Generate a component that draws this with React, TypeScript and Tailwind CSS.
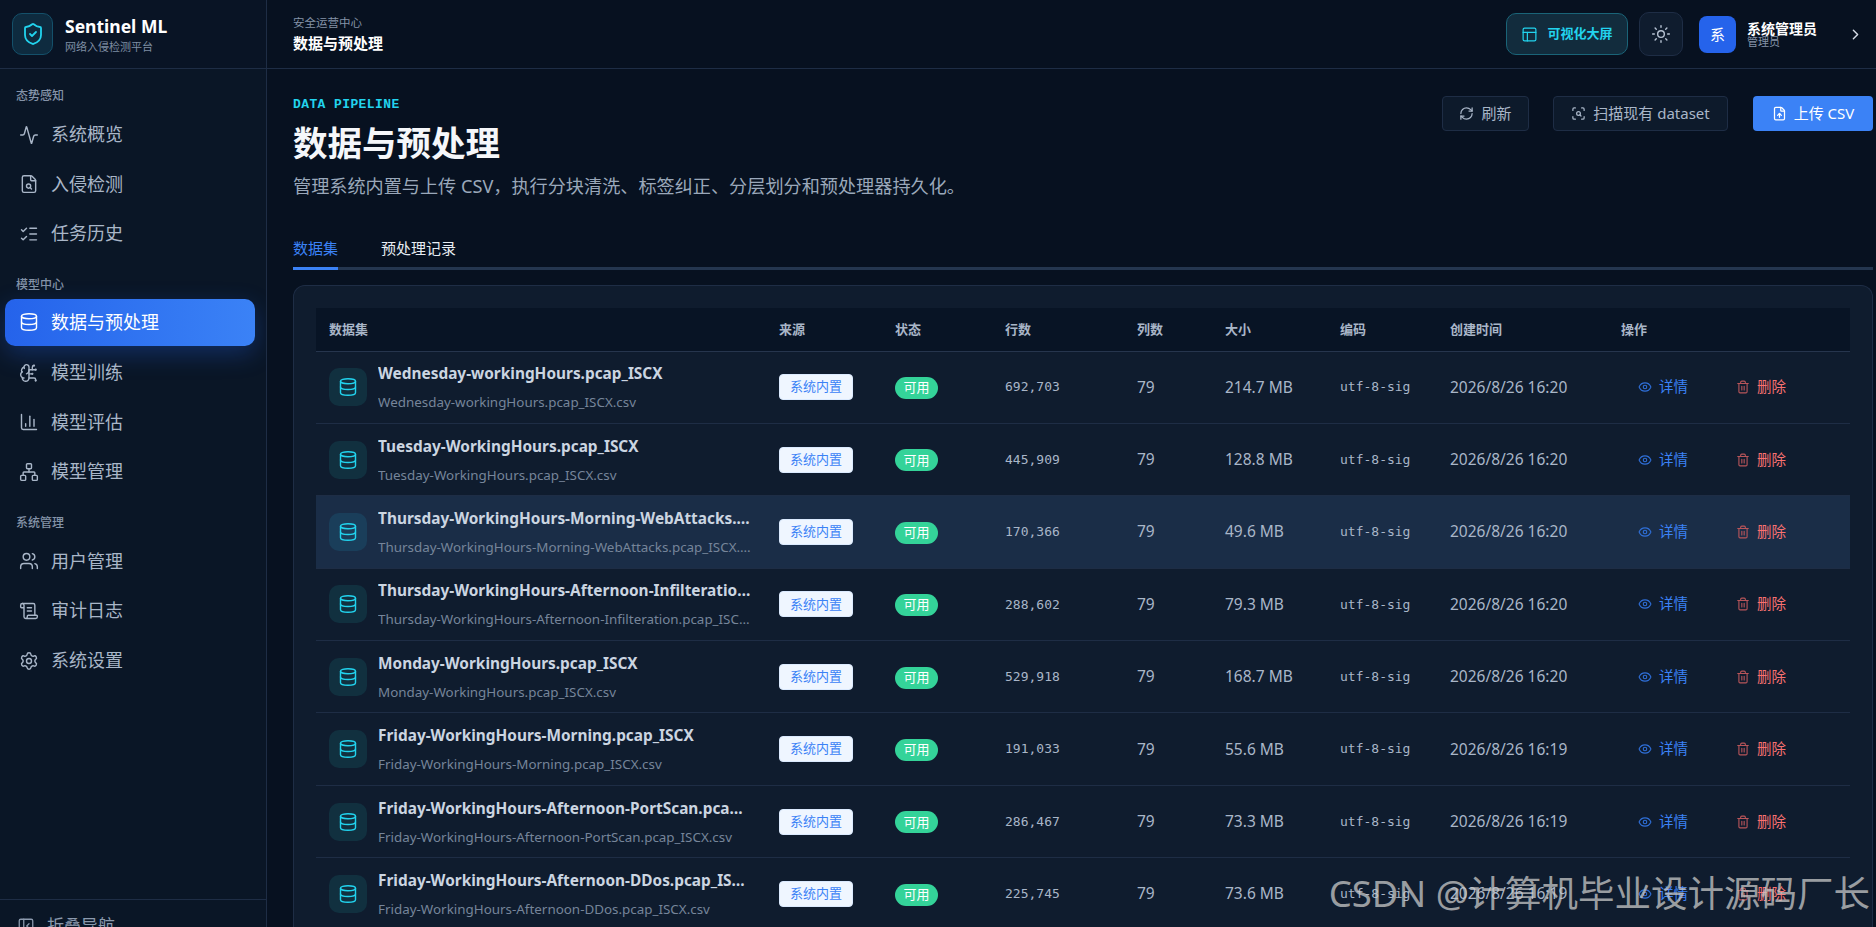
import {
  Activity, BrainCircuit, ChartColumn, ChevronRight, Database, Eye, FileSearch, FileUp, ListChecks,
  Network, PanelLeftClose, PanelsTopLeft, RefreshCw, ScanSearch, ScrollText, Settings, ShieldCheck, Sun, Trash2, Users,
} from 'lucide-react'

const NAV = [
  {
    title: '态势感知',
    items: [
      { label: '系统概览', icon: Activity },
      { label: '入侵检测', icon: FileSearch },
      { label: '任务历史', icon: ListChecks },
    ],
  },
  {
    title: '模型中心',
    items: [
      { label: '数据与预处理', icon: Database, active: true },
      { label: '模型训练', icon: BrainCircuit },
      { label: '模型评估', icon: ChartColumn },
      { label: '模型管理', icon: Network },
    ],
  },
  {
    title: '系统管理',
    items: [
      { label: '用户管理', icon: Users },
      { label: '审计日志', icon: ScrollText },
      { label: '系统设置', icon: Settings },
    ],
  },
]

const ROWS = [
  { name: 'Wednesday-workingHours.pcap_ISCX', rows: '692,703', size: '214.7 MB', time: '2026/8/26 16:20' },
  { name: 'Tuesday-WorkingHours.pcap_ISCX', rows: '445,909', size: '128.8 MB', time: '2026/8/26 16:20' },
  { name: 'Thursday-WorkingHours-Morning-WebAttacks.pcap_ISCX', rows: '170,366', size: '49.6 MB', time: '2026/8/26 16:20', hover: true },
  { name: 'Thursday-WorkingHours-Afternoon-Infilteration.pcap_ISCX', rows: '288,602', size: '79.3 MB', time: '2026/8/26 16:20' },
  { name: 'Monday-WorkingHours.pcap_ISCX', rows: '529,918', size: '168.7 MB', time: '2026/8/26 16:20' },
  { name: 'Friday-WorkingHours-Morning.pcap_ISCX', rows: '191,033', size: '55.6 MB', time: '2026/8/26 16:19' },
  { name: 'Friday-WorkingHours-Afternoon-PortScan.pcap_ISCX', rows: '286,467', size: '73.3 MB', time: '2026/8/26 16:19' },
  { name: 'Friday-WorkingHours-Afternoon-DDos.pcap_ISCX', rows: '225,745', size: '73.6 MB', time: '2026/8/26 16:19' },
]

const COLUMNS = [
  { label: '数据集', width: 'w-[450px]' },
  { label: '来源', width: 'w-[116px]' },
  { label: '状态', width: 'w-[110px]' },
  { label: '行数', width: 'w-[132px]' },
  { label: '列数', width: 'w-[88px]' },
  { label: '大小', width: 'w-[115px]' },
  { label: '编码', width: 'w-[110px]' },
  { label: '创建时间', width: 'w-[171px]' },
  { label: '操作', width: 'w-[242px]' },
]

function Sidebar() {
  return (
    <aside className="flex h-full w-[267px] shrink-0 flex-col border-r border-[#1e2d45] bg-[#0a1626]">
      <div className="flex h-[69px] shrink-0 items-center gap-[12px] border-b border-[#1e2d45] bg-[#091425] pl-3">
        <div className="flex h-[42px] w-[41px] items-center justify-center rounded-[10px] border border-[#14506a] bg-[#0e2b3f]">
          <ShieldCheck size={24} className="text-[#22d3ee]" strokeWidth={1.8} />
        </div>
        <div>
          <div className="text-[17.5px] font-bold leading-[22px] text-white">Sentinel ML</div>
          <div className="mt-[3px] text-[11px] leading-[14px] text-[#7f8ea3]">网络入侵检测平台</div>
        </div>
      </div>
      <nav className="flex-1 overflow-hidden pt-[18px]">
        {NAV.map((group) => (
          <div key={group.title} className="mb-[19px]">
            <div className="mb-[5px] pl-4 text-[12px] font-medium leading-[18px] text-[#8493a8]">{group.title}</div>
            <div className="flex flex-col gap-[2px]">
              {group.items.map((item) => (
                <div
                  key={item.label}
                  className={
                    item.active
                      ? 'ml-[5px] mr-[11px] flex h-[47px] items-center gap-[12px] rounded-[10px] bg-gradient-to-r from-[#2563eb] to-[#3b82f6] pl-[14px] text-[18px] text-white shadow-[0_8px_24px_rgba(37,99,235,0.3)]'
                      : 'ml-[5px] mr-[11px] flex h-[47.6px] items-center gap-[12px] pl-[14px] pt-[2px] text-[18px] text-[#a9b6c8]'
                  }
                >
                  <item.icon size={20} strokeWidth={1.7} />
                  <span>{item.label}</span>
                </div>
              ))}
            </div>
          </div>
        ))}
      </nav>
      <div className="flex h-[28px] shrink-0 items-start gap-[12px] overflow-hidden border-t border-[#1e2d45] pl-[17px] pt-[14px] text-[17px] leading-[24px] text-[#8c9aae]">
        <PanelLeftClose size={18} strokeWidth={1.7} className="mt-[3px] shrink-0" />
        <span>折叠导航</span>
      </div>
    </aside>
  )
}

function TopBar() {
  return (
    <header className="flex h-[69px] shrink-0 items-center justify-between border-b border-[#1e2d45] pl-[26px] pr-[12px]">
      <div>
        <div className="text-[11.5px] leading-[16px] text-[#8493a8]">安全运营中心</div>
        <div className="mt-[2px] text-[15px] font-bold leading-[20px] text-white">数据与预处理</div>
      </div>
      <div className="flex items-center">
        <button className="flex h-[42px] w-[122px] items-center justify-center gap-[9px] rounded-[10px] border border-[#1a6478] bg-[#122c3d] text-[13px] font-bold text-[#22d3ee]">
          <PanelsTopLeft size={17} strokeWidth={1.7} />
          可视化大屏
        </button>
        <button className="ml-[11px] flex h-[44px] w-[44px] items-center justify-center rounded-[10px] border border-[#1e2d45] bg-[#0f1c2e] text-[#b6c2d2]">
          <Sun size={20} strokeWidth={1.7} />
        </button>
        <div className="ml-[16px] flex h-[37px] w-[37px] items-center justify-center rounded-[8px] bg-[#2563eb] text-[15px] text-white">系</div>
        <div className="ml-[11px] w-[100px]">
          <div className="text-[14px] font-bold leading-[15px] text-white">系统管理员</div>
          <div className="text-[11px] leading-[12px] text-[#8493a8]">管理员</div>
        </div>
        <ChevronRight size={17} className="text-[#d5dce6]" strokeWidth={2} />
      </div>
    </header>
  )
}

function Toolbar() {
  return (
    <div className="flex items-center gap-[24px]">
      <button className="flex h-[35px] w-[87px] items-center justify-center gap-[7px] rounded-[4px] border border-[#1e2d45] bg-[#0d1a2b] text-[15px] text-[#a9b6c8]">
        <RefreshCw size={15} strokeWidth={2} />
        刷新
      </button>
      <button className="flex h-[35px] w-[175px] items-center justify-center gap-[7px] rounded-[4px] border border-[#1e2d45] bg-[#0d1a2b] text-[15px] text-[#a9b6c8]">
        <ScanSearch size={15} strokeWidth={2} />
        扫描现有 dataset
      </button>
      <button className="ml-[1px] flex h-[35px] w-[120px] items-center justify-center gap-[7px] rounded-[4px] bg-[#3b82f6] text-[15px] text-white">
        <FileUp size={15} strokeWidth={2} />
        上传 CSV
      </button>
    </div>
  )
}

function DatasetTable() {
  return (
    <div className="rounded-t-[12px] border border-b-0 border-[#1e2d45] bg-[#0f1c2e] px-[22px] pt-[22px]">
      <table className="w-[1534px] table-fixed border-collapse">
        <thead>
          <tr className="h-[43px] border-b border-[#26354d] bg-[#081425] text-left text-[13px] text-[#a9b6c8]">
            {COLUMNS.map((col) => (
              <th key={col.label} className={`${col.width} px-[13px] font-semibold`}>{col.label}</th>
            ))}
          </tr>
        </thead>
        <tbody>
          {ROWS.map((row) => (
            <tr key={row.name} className={`h-[72.4px] border-b border-[#1e2d45] text-[15.5px] text-[#a9b6c8] ${row.hover ? 'bg-[#1a2d47]' : ''}`}>
              <td className="pl-[13px] pr-[15px]">
                <div className="flex items-center gap-[11px]">
                  <div className={`flex h-[38px] w-[38px] shrink-0 items-center justify-center rounded-[10px] ${row.hover ? 'bg-[#1a3e5a]' : 'bg-[#11303f]'}`}>
                    <Database size={20} strokeWidth={1.7} className="text-[#22d3ee]" />
                  </div>
                  <div className="min-w-0 flex-1">
                    <div className="truncate text-[15.4px] font-bold leading-[21px] text-[#cbd5e1]">{row.name}</div>
                    <div className="mt-[10px] truncate text-[13.4px] leading-[17px] text-[#76859a]">{row.name}.csv</div>
                  </div>
                </div>
              </td>
              <td className="px-[13px]">
                <span className="inline-flex h-[26px] w-[74px] items-center justify-center rounded-[4px] border border-[#dbeafe] bg-[#eff6ff] text-[13px] text-[#3b82f6]">系统内置</span>
              </td>
              <td className="px-[13px]">
                <span className="inline-flex h-[22px] w-[43px] items-center justify-center rounded-full bg-[#34d399] text-[13px] text-white">可用</span>
              </td>
              <td className="px-[13px] font-['DejaVu_Sans_Mono',monospace] text-[13px]">{row.rows}</td>
              <td className="px-[13px]">79</td>
              <td className="px-[13px]">{row.size}</td>
              <td className="px-[13px] font-['DejaVu_Sans_Mono',monospace] text-[13px]">utf-8-sig</td>
              <td className="px-[13px]">{row.time}</td>
              <td className="px-[13px]">
                <div className="flex items-center pl-[17px] text-[14.5px]">
                  <span className="flex w-[98px] items-center gap-[7px] text-[#3b82f6]">
                    <Eye size={14} strokeWidth={1.9} className="text-[#2f6fd8]" />
                    详情
                  </span>
                  <span className="flex items-center gap-[7px] text-[#f87171]">
                    <Trash2 size={14} strokeWidth={1.9} className="text-[#b9555a]" />
                    删除
                  </span>
                </div>
              </td>
            </tr>
          ))}
        </tbody>
      </table>
    </div>
  )
}

export default function App() {
  return (
    <div className="relative flex h-screen overflow-hidden bg-[#071120] font-['Noto_Sans','Noto_Sans_CJK_SC',sans-serif]">
      <Sidebar />
      <div className="flex min-w-0 flex-1 flex-col">
        <TopBar />
        <main className="min-h-0 flex-1 overflow-hidden pl-[26px] pr-[3px] pt-[27px]">
          <div className="flex items-start justify-between">
            <div className="pt-[2px]">
              <div className="font-['Liberation_Mono',monospace] text-[13px] font-bold leading-[14px] tracking-[0.4px] text-[#22d3ee]">DATA PIPELINE</div>
              <h1 className="mt-[8px] text-[34.5px] font-bold leading-[46px] text-[#f5f7fa]">数据与预处理</h1>
              <p className="mt-[8px] text-[18.15px] leading-[24px] text-[#9aa8ba]">管理系统内置与上传 CSV，执行分块清洗、标签纠正、分层划分和预处理器持久化。</p>
            </div>
            <Toolbar />
          </div>
          <div className="mt-[39px] flex h-[33px] gap-[43px] border-b-[3px] border-[#24364f] text-[15px]">
            <span className="relative h-[33px] text-[#3b82f6]">
              数据集
              <span className="absolute inset-x-0 bottom-0 h-[3px] bg-[#3b82f6]" />
            </span>
            <span className="text-[#e8edf3]">预处理记录</span>
          </div>
          <div className="mt-[15px]">
            <DatasetTable />
          </div>
        </main>
      </div>
      <div className="pointer-events-none absolute bottom-[12px] right-[6px] text-[36.5px] leading-[44px] text-[#c8c8c8]/75">CSDN @计算机毕业设计源码厂长</div>
    </div>
  )
}
